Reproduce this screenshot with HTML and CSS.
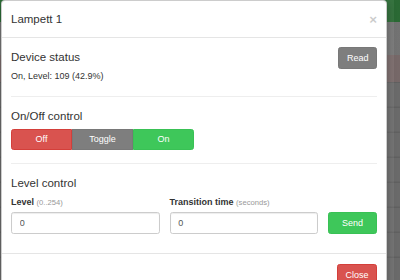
FILE: index.html
```html
<!DOCTYPE html>
<html lang="en">
<head>
  <meta charset="UTF-8" />
  <title>Lampett 1</title>
  <link rel="stylesheet" href="styles.css">
</head>
<body>
  <div class="modal">
    <div class="modal-header">
      <h4 class="modal-title">Lampett 1</h4>
      <button class="close">&times;</button>
    </div>

    <div class="modal-body">
      <div class="status">
        <div class="status-text">
          <h4>Device status</h4>
          <p>On, Level: 109 (42.9%)</p>
        </div>
        <button class="btn btn-gray">Read</button>
      </div>

      <hr>

      <h4>On/Off control</h4>
      <div class="btn-group">
        <button class="btn btn-red">Off</button>
        <button class="btn btn-gray">Toggle</button>
        <button class="btn btn-green">On</button>
      </div>

      <hr>

      <h4>Level control</h4>
      <div class="level-form">
        <div class="field">
          <label>Level <small>(0..254)</small></label>
          <input type="text" value="0" />
        </div>
        <div class="field">
          <label>Transition time <small>(seconds)</small></label>
          <input type="text" value="0" />
        </div>
        <button class="btn btn-green">Send</button>
      </div>
    </div>

    <div class="modal-footer">
      <button class="btn btn-red">Close</button>
    </div>
  </div>
</body>
</html>
```

FILE: styles.css
```css
html, body {
  height: 100%;
  overflow: hidden;
}

body {
  margin: 0;
  font-family: "Liberation Sans", Arial, sans-serif;
  font-size: 9px;
  line-height: 1.42857;
  color: #333;
  /* dimmed page behind the backdrop */
  background:
    linear-gradient(to right, transparent 387px, rgba(255, 255, 255, 0.05) 387px 394px, rgba(0, 0, 0, 0.04) 394px),
    linear-gradient(#2c6d36 0 22px, #777 22px 55px, #7b6c6c 55px 82px, transparent 82px),
    repeating-linear-gradient(#5f5f5f 0 1px, #6e6e6e 1px 25px);
  background-position: 0 0, 0 0, 0 6.7px;
}

.modal {
  width: 384px;
  margin: 0 0 0 1px;
  background: #fff;
  border: 1px solid rgba(0, 0, 0, 0.2);
  border-radius: 4px;
  box-shadow: 0 3px 10px rgba(0, 0, 0, 0.3);
}

.modal-header {
  display: flex;
  align-items: flex-start;
  justify-content: space-between;
  padding: 9.6px 9px;
  border-bottom: 1px solid #e5e5e5;
}

.modal-title {
  margin: 0;
  font-size: 11.5px;
  font-weight: normal;
  line-height: 16.4px;
}

.close {
  margin-top: 2px;
  padding: 0;
  border: none;
  background: none;
  font-family: inherit;
  font-size: 13.4px;
  font-weight: bold;
  line-height: 1;
  color: #000;
  opacity: 0.2;
}

.modal-body {
  padding: 9.6px 9px;
}

h4 {
  margin: 6.4px 0;
  font-size: 11.5px;
  font-weight: normal;
  line-height: 1.1;
}

p {
  margin: 0 0 6.4px;
}

hr {
  margin: 12.8px 0;
  border: 0;
  border-top: 1px solid #eee;
}

.status {
  display: flex;
  justify-content: space-between;
  align-items: flex-start;
}

.status h4 {
  margin-top: 4px;
}

.status p {
  margin-bottom: 0;
}

.btn {
  padding: 3.5px 7.5px;
  font-family: inherit;
  font-size: 9px;
  line-height: 12.8px;
  color: #fff;
  border: 1px solid transparent;
  border-radius: 2.6px;
  cursor: pointer;
}

.btn-gray { background-color: #7e7e7e; border-color: #787878; }
.btn-red { background-color: #d9534f; border-color: #d43f3a; }
.btn-green { background-color: #3ec75a; border-color: #39c155; }

.btn-group {
  display: flex;
}

.btn-group .btn {
  width: 61px;
  border-radius: 0;
}

.btn-group .btn:first-child { border-radius: 2.6px 0 0 2.6px; }
.btn-group .btn:last-child { border-radius: 0 2.6px 2.6px 0; }

.level-form {
  display: grid;
  grid-template-columns: 1fr 1fr 49px;
  column-gap: 10px;
  align-items: end;
  margin-bottom: 9.6px;
}

.field label {
  display: block;
  margin-bottom: 3.2px;
  font-weight: bold;
}

.field small {
  font-size: 85%;
  font-weight: normal;
  color: #999;
}

.field input {
  box-sizing: border-box;
  width: 100%;
  height: 21.8px;
  padding: 3.5px 7.7px;
  font-family: inherit;
  font-size: 9px;
  color: #555;
  border: 1px solid #ccc;
  border-radius: 2.6px;
  box-shadow: inset 0 1px 1px rgba(0, 0, 0, 0.075);
}

.modal-footer {
  padding: 10px 9px 9.6px;
  text-align: right;
  border-top: 1px solid #e5e5e5;
}
```
